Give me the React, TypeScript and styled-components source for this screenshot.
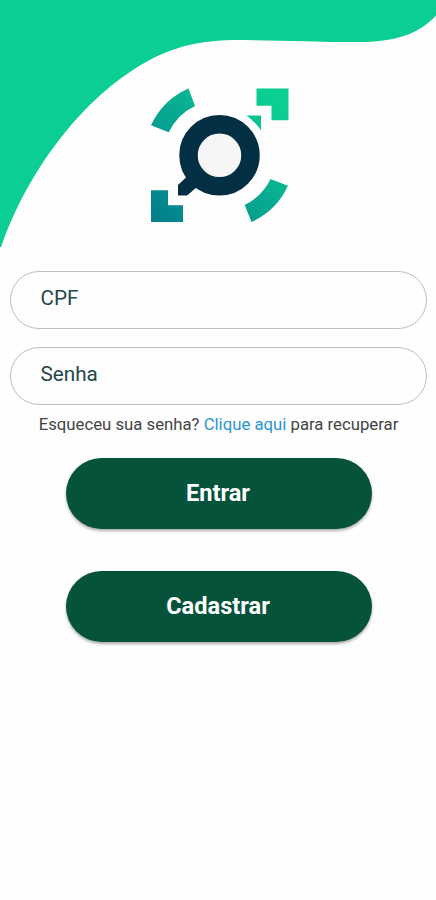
import React from "react";
import styled, { createGlobalStyle } from "styled-components";

const GlobalStyle = createGlobalStyle`
  *, *::before, *::after { box-sizing: border-box; }
  body { margin: 0; background: #fefefe; font-family: Roboto, "Liberation Sans", sans-serif; }
`;

const Screen = styled.main`
  width: 436px;
  height: 900px;
  display: flex;
  flex-direction: column;
  background: #fefefe;
  overflow: hidden;
`;

const Header = styled.header`
  position: relative;
  height: 271px;
  flex: none;
  display: flex;
  justify-content: center;
  align-items: flex-start;
  padding: 88px 0 0 3px;
`;

const Wave = styled.svg`
  position: absolute;
  top: 0;
  left: 0;
`;

const Logo = styled.svg`
  position: relative;
  display: block;
`;

const Form = styled.form`
  display: flex;
  flex-direction: column;
  padding: 0 9px 0 10px;
`;

const Field = styled.input`
  height: 58px;
  width: 100%;
  margin: 0 0 18px;
  padding: 0 29.5px 4px;
  border: 1.5px solid #b9c0c2;
  border-radius: 29px;
  background: transparent;
  color: #24474a;
  font: 400 20.7px Roboto, "Liberation Sans", sans-serif;
  outline: none;

  &::placeholder { color: #24474a; opacity: 1; }
`;

const Recover = styled.p`
  margin: -10px 0 0;
  text-align: center;
  white-space: nowrap;
  font-size: 16.74px;
  line-height: 22px;
  color: #444;
`;

const RecoverLink = styled.a`
  color: #2b95cf;
  text-decoration: none;
`;

const Actions = styled.div`
  display: flex;
  flex-direction: column;
  align-items: center;
  gap: 42px;
  padding-top: 23px;
`;

const Button = styled.button`
  width: 306px;
  height: 71px;
  padding: 0 1px 2px 0;
  border: 0;
  border-radius: 36px;
  background: #06533c;
  color: #fff;
  font: 700 23.6px Roboto, "Liberation Sans", sans-serif;
  box-shadow: 0 2px 3px rgba(0, 0, 0, 0.32);
`;

function BrandMark() {
  return (
    <Logo width="139" height="135" viewBox="150 88 139 135" aria-hidden="true">
      <defs>
        <linearGradient id="mark" gradientUnits="userSpaceOnUse" x1="273" y1="105" x2="160" y2="218">
          <stop offset="0" stopColor="#0bce93" />
          <stop offset="1" stopColor="#04808d" />
        </linearGradient>
      </defs>
      <g fill="url(#mark)">
        <path d="M188.5 88.5A74 74 0 0 0 151 125.3L168.7 132.3A56 56 0 0 1 195 106Z" />
        <path d="M270.5 179A56 56 0 0 1 244.7 205L251.5 222A74 74 0 0 0 288 185.7Z" />
        <path d="M256.5 88.5H288.5V120.3H271.5V105.7H256.5Z" />
        <path d="M151 190.3H168V205.3H183V222H151Z" />
        <path d="M246.5 115.5H261V130.5Q255 121.5 246.5 115.5Z" />
      </g>
      <path fill="#032f45" d="M186.5 177L178 185V195.5H187L196.5 187.5Z" />
      <circle cx="219.5" cy="155.3" r="31" fill="#f6f6f6" stroke="#032f45" strokeWidth="18.5" />
    </Logo>
  );
}

export default function App() {
  return (
    <>
      <GlobalStyle />
      <Screen>
        <Header>
          <Wave width="436" height="250" viewBox="0 0 436 250" aria-hidden="true">
            <path
              fill="#0bce94"
              d="M0 0H436V15.500C418 35 394 42 358 42C315 42 275 40 233 40C190 41 163 50 130 72C106 88 88 106 72 124C42 159 17 201 1 247H0Z"
            />
          </Wave>
          <BrandMark />
        </Header>
        <Form onSubmit={(event) => event.preventDefault()}>
          <Field type="text" placeholder="CPF" aria-label="CPF" />
          <Field type="password" placeholder="Senha" aria-label="Senha" />
          <Recover>
            Esqueceu sua senha? <RecoverLink href="#">Clique aqui</RecoverLink> para recuperar
          </Recover>
          <Actions>
            <Button type="submit">Entrar</Button>
            <Button type="button">Cadastrar</Button>
          </Actions>
        </Form>
      </Screen>
    </>
  );
}
